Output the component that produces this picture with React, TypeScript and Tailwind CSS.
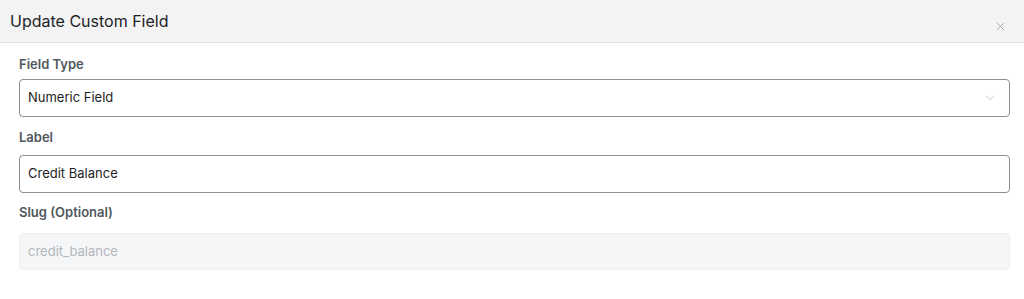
import { ChevronDown, X } from "lucide-react";

export default function App() {
  return (
    <div className="h-[299px] w-[1024px] bg-white font-['Inter','Noto_Sans',sans-serif] text-[#1e1e1e]">
      <div className="flex h-[43px] items-center justify-between border-b border-[#e2e2e2] bg-[#f3f3f3] pl-[10px] pr-[17px]">
        <h1 className="text-[16px] font-normal text-[#1d2327]">Update Custom Field</h1>
        <X className="mt-[10px] h-[13px] w-[13px] text-[#9a9a9a]" strokeWidth={1.5} />
      </div>

      <div className="pl-[19px] pr-[14px] pt-[11px]">
        <label className="block h-[20px] text-[13px] font-semibold leading-[20px] text-[#50575e]">Field Type</label>
        <div className="mt-[5px] flex h-[38px] items-center justify-between rounded-[4px] border border-[#8c8f94] pl-[8px] pr-[12px]">
          <span className="text-[13px] text-[#1e1e1e]">Numeric Field</span>
          <ChevronDown className="h-[14px] w-[14px] text-[#c3c4c7]" strokeWidth={1.5} />
        </div>

        <label className="mt-[10px] block h-[20px] text-[13px] font-semibold leading-[20px] text-[#50575e]">Label</label>
        <div className="mt-[8px] flex h-[38px] items-center rounded-[4px] border border-[#8c8f94] pl-[8px]">
          <span className="text-[13px] text-[#1e1e1e]">Credit Balance</span>
        </div>

        <label className="mt-[9px] block h-[20px] text-[13px] font-semibold leading-[20px] text-[#50575e]">Slug (Optional)</label>
        <div className="mt-[11px] flex h-[37px] items-center rounded-[4px] border border-[#eceef1] bg-[#f5f6f8] pl-[8px]">
          <span className="text-[13px] text-[#b4b7bb]">credit_balance</span>
        </div>
      </div>
    </div>
  );
}
